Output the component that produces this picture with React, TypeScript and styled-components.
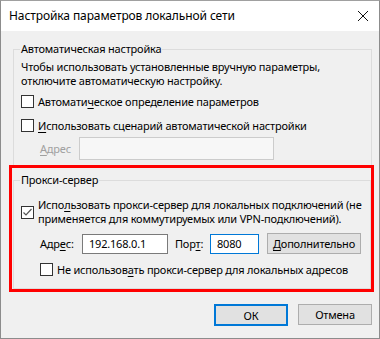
import React from 'react';
import styled, { createGlobalStyle } from 'styled-components';

const GlobalStyle = createGlobalStyle`
  html, body {
    margin: 0;
    padding: 0;
    background: #ffffff;
  }
  body {
    font-family: "Noto Sans", "DejaVu Sans", sans-serif;
    font-size: 11px;
    letter-spacing: -0.2px;
    color: #000;
  }
`;

const Window = styled.div`
  width: 380px;
  height: 339px;
  box-sizing: border-box;
  border: 1px solid #8c8c8c;
  border-top-color: #a0a0a0;
  background: #f0f0f0;
  display: flex;
  flex-direction: column;
  overflow: hidden;
`;

const TitleBar = styled.div`
  height: 30px;
  flex-shrink: 0;
  background: #ffffff;
  display: flex;
  align-items: center;
  justify-content: space-between;
  padding: 0 9px 0 8px;
`;

const Title = styled.span`
  font-size: 12px;
  letter-spacing: -0.1px;
  line-height: 16px;
  white-space: nowrap;
`;

const CloseButton = styled.div`
  width: 12px;
  height: 12px;
  display: flex;
  margin-right: 1px;
`;

const Body = styled.div`
  flex: 1;
  padding: 10px 7px 0 12px;
  display: flex;
  flex-direction: column;
  white-space: nowrap;
`;

const Group = styled.fieldset<{ $bottom: number }>`
  margin: 0;
  padding: 0 7px ${(p) => p.$bottom}px 7px;
  border: 1px solid #dcdcdc;
  min-width: 0;
  display: flex;
  flex-direction: column;
`;

const Legend = styled.legend`
  padding: 0 1px;
  margin-left: -1px;
  line-height: 16px;
`;

const Text = styled.p`
  margin: 3px 0 0;
  line-height: 14px;
`;

const CheckRow = styled.label<{ $top: number; $indent?: number }>`
  display: flex;
  align-items: center;
  gap: 4px;
  min-height: 15px;
  margin-top: ${(p) => p.$top}px;
  margin-left: ${(p) => p.$indent || 0}px;
  line-height: 14px;
`;

const Box = styled.span`
  width: 13px;
  height: 13px;
  box-sizing: border-box;
  border: 1px solid #333333;
  background: #ffffff;
  flex-shrink: 0;
  display: flex;
  align-items: center;
  justify-content: center;
`;

const Key = styled.u`
  text-decoration: underline;
  text-underline-offset: 2px;
  text-decoration-thickness: 1px;
`;

const FieldRow = styled.div<{ $top: number }>`
  display: flex;
  align-items: center;
  margin-top: ${(p) => p.$top}px;
  margin-left: 19px;
`;

const FieldLabel = styled.span<{ $disabled?: boolean; $width?: number; $gap?: number }>`
  color: ${(p) => (p.$disabled ? '#a0a0a0' : '#000')};
  width: ${(p) => (p.$width ? `${p.$width}px` : 'auto')};
  margin-left: ${(p) => p.$gap || 0}px;
  flex-shrink: 0;
`;

const Input = styled.div<{ $width: number; $height: number; $state: 'disabled' | 'normal' | 'focus' }>`
  width: ${(p) => p.$width}px;
  height: ${(p) => p.$height}px;
  box-sizing: border-box;
  border: 1px solid
    ${(p) => (p.$state === 'disabled' ? '#cccccc' : p.$state === 'focus' ? '#0078d7' : '#7a7a7a')};
  background: ${(p) => (p.$state === 'disabled' ? '#f7f7f7' : '#ffffff')};
  display: flex;
  align-items: center;
  padding-left: 6px;
  flex-shrink: 0;
`;

const Highlight = styled.div`
  margin: -2px -2px 0 -4px;
  padding: 4px 0 0 1px;
  border: 3px solid #ff0000;
  display: flex;
  flex-direction: column;
`;

const Button = styled.div<{ $default?: boolean; $width: number; $gap?: number }>`
  width: ${(p) => p.$width}px;
  height: ${(p) => (p.$default ? 22 : 21)}px;
  margin-left: ${(p) => p.$gap || 0}px;
  box-sizing: border-box;
  border: ${(p) => (p.$default ? '2px solid #0078d7' : '1px solid #adadad')};
  background: #e1e1e1;
  display: flex;
  align-items: center;
  justify-content: center;
  flex-shrink: 0;
`;

const Footer = styled.div`
  display: flex;
  justify-content: flex-end;
  align-items: flex-start;
  gap: 10px;
  margin-top: 12px;
`;

const CheckMark = () => (
  <svg width="11" height="11" viewBox="0 0 11 11">
    <polyline points="1.5,5.5 4,8 9.5,2" fill="none" stroke="#555" strokeWidth="1.2" />
  </svg>
);

const App: React.FC = () => (
  <>
    <GlobalStyle />
    <Window>
      <TitleBar>
        <Title>Настройка параметров локальной сети</Title>
        <CloseButton>
          <svg width="12" height="12" viewBox="0 0 12 12">
            <path d="M1 1 L11 11 M11 1 L1 11" stroke="#111" strokeWidth="1" />
          </svg>
        </CloseButton>
      </TitleBar>
      <Body>
        <Group $bottom={6}>
          <Legend>Автоматическая настройка</Legend>
          <Text>
            Чтобы использовать установленные вручную параметры,
            <br />
            отключите автоматическую настройку.
          </Text>
          <CheckRow $top={6}>
            <Box />
            <span>
              Автомати<Key>ч</Key>еское определение параметров
            </span>
          </CheckRow>
          <CheckRow $top={9}>
            <Box />
            <span>
              <Key>И</Key>спользовать сценарий автоматической настройки
            </span>
          </CheckRow>
          <FieldRow $top={4}>
            <FieldLabel $disabled $width={39}>
              <Key>А</Key>дрес
            </FieldLabel>
            <Input $width={195} $height={23} $state="disabled" />
          </FieldRow>
        </Group>
        <Highlight>
          <Group $bottom={11}>
            <Legend>Прокси-сервер</Legend>
            <CheckRow $top={10}>
              <Box>
                <CheckMark />
              </Box>
              <span>
                Испо<Key>л</Key>ьзовать прокси-сервер для локальных подключений (не
                <br />
                применяется для коммутируемых или VPN-подключений).
              </span>
            </CheckRow>
            <FieldRow $top={7}>
              <FieldLabel $width={42}>
                Адр<Key>е</Key>с:
              </FieldLabel>
              <Input $width={86} $height={20} $state="normal">
                192.168.0.1
              </Input>
              <FieldLabel $gap={7} $width={35}>
                Пор<Key>т</Key>:
              </FieldLabel>
              <Input $width={49} $height={20} $state="focus">
                8080
              </Input>
              <Button $width={94} $gap={8}>
                <span>
                  <Key>Д</Key>ополнительно
                </span>
              </Button>
            </FieldRow>
            <CheckRow $top={8} $indent={19}>
              <Box />
              <span>
                Не использов<Key>а</Key>ть прокси-сервер для локальных адресов
              </span>
            </CheckRow>
          </Group>
        </Highlight>
        <Footer>
          <Button $default $width={74}>
            ОК
          </Button>
          <Button $width={74}>Отмена</Button>
        </Footer>
      </Body>
    </Window>
  </>
);

export default App;
